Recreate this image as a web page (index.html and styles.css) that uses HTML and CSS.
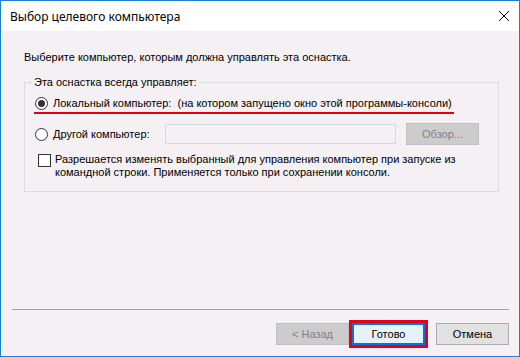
FILE: index.html
```html
<!DOCTYPE html>
<html lang="ru">
<head>
<meta charset="utf-8">
<title>Выбор целевого компьютера</title>
<link rel="stylesheet" href="styles.css">
</head>
<body>
<div class="window">
  <div class="titlebar">
    <span class="title">Выбор целевого компьютера</span>
    <svg class="close" width="12" height="12" viewBox="0 0 12 12"><path d="M1 1 L11 11 M11 1 L1 11" stroke="#000" stroke-width="1" fill="none"/></svg>
  </div>
  <div class="content">
    <p class="intro">Выберите компьютер, которым должна управлять эта оснастка.</p>
    <fieldset class="group">
      <legend>Эта оснастка всегда управляет:</legend>
      <div class="row row-local">
        <label class="opt marked"><span class="radio checked"></span><span class="opt-text">Локальный компьютер:&nbsp; (на котором запущено окно этой программы-консоли)</span></label>
      </div>
      <div class="row row-other">
        <label class="opt opt-other"><span class="radio"></span><span class="opt-text">Другой компьютер:</span></label>
        <span class="textbox"></span>
        <span class="btn btn-disabled browse">Обзор...</span>
      </div>
      <div class="row row-check">
        <span class="checkbox"></span>
        <span class="check-text">Разрешается изменять выбранный для управления компьютер при запуске из<br>командной строки. Применяется только при сохранении консоли.</span>
      </div>
    </fieldset>
    <div class="separator"></div>
    <div class="buttons">
      <span class="btn btn-disabled">&lt; Назад</span>
      <span class="btn btn-default">Готово</span>
      <span class="btn btn-cancel">Отмена</span>
    </div>
  </div>
</div>
</body>
</html>
```
FILE: styles.css
```css
html, body {
  margin: 0;
  padding: 0;
}
body {
  width: 520px;
  height: 357px;
  overflow: hidden;
  font-family: "Liberation Sans", Arial, sans-serif;
  font-size: 11px;
  color: #000;
}
.window {
  box-sizing: border-box;
  width: 520px;
  height: 357px;
  border: 1px solid #1a7fd4;
  display: flex;
  flex-direction: column;
  background: #f4f0f4;
}
.titlebar {
  height: 30px;
  background: #fff;
  display: flex;
  align-items: center;
  justify-content: space-between;
  padding: 0 9px 0 9px;
  flex: none;
}
.title {
  font-family: "Noto Sans", "Open Sans", sans-serif;
  font-size: 12px;
  line-height: 16px;
  margin-top: 1px;
}
.close {
  display: block;
  margin-top: 0px;
}
.content {
  flex: 1;
  display: flex;
  flex-direction: column;
  padding-top: 20px;
}
.intro {
  margin: 0 0 0 23px;
  line-height: 13px;
}
.group {
  margin: 12px 20px 0 23px;
  padding: 8px 10px 12px 10px;
  border: 1px solid #dcdcdc;
  min-width: 0;
}
.group legend {
  padding: 0 2px;
  margin-left: -3px;
  line-height: 13px;
}
.row {
  display: flex;
  align-items: center;
}
.opt {
  display: inline-flex;
  align-items: center;
  line-height: 13px;
}
.radio {
  box-sizing: border-box;
  width: 13px;
  height: 13px;
  border: 1px solid #333;
  border-radius: 50%;
  background: #fff;
  margin-right: 5px;
  display: flex;
  align-items: center;
  justify-content: center;
  flex: none;
}
.radio.checked::after {
  content: "";
  width: 7px;
  height: 7px;
  border-radius: 50%;
  background: #333;
}
.marked {
  margin-left: -1px;
  padding: 0 2px 2px 1px;
  border-bottom: 2px solid #e3001b;
}
.row-other {
  margin-top: 9px;
}
.opt-other {
  width: 130px;
}
.textbox {
  box-sizing: border-box;
  width: 231px;
  height: 20px;
  border: 1px solid #d9d9d9;
  background: #f4f0f4;
}
.browse {
  margin-left: 10px;
  width: 77px;
  height: 20px;
}
.row-check {
  margin-top: 8px;
  align-items: flex-start;
}
.checkbox {
  box-sizing: border-box;
  width: 13px;
  height: 13px;
  border: 1px solid #333;
  background: #fff;
  margin: 1px 4px 0 3px;
  flex: none;
}
.check-text {
  line-height: 13px;
}
.separator {
  margin: auto 10px 0 11px;
  height: 1px;
  background: #a0a0a0;
}
.buttons {
  display: flex;
  justify-content: flex-end;
  margin: 13px 10px 11px 0;
  gap: 3px;
}
.btn {
  box-sizing: border-box;
  width: 73px;
  height: 22px;
  display: inline-flex;
  align-items: center;
  justify-content: center;
  border: 1px solid #adadad;
  background: #e1e1e1;
  line-height: 13px;
}
.btn-disabled {
  background: #cccccc;
  border-color: #bfbfbf;
  color: #838383;
}
.btn-default {
  background: #e5f1fb;
  border: 2px solid #0078d7;
  outline: 3px solid #e3001b;
  outline-offset: 0;
}
.btn-cancel {
  margin-left: 8px;
}
```
